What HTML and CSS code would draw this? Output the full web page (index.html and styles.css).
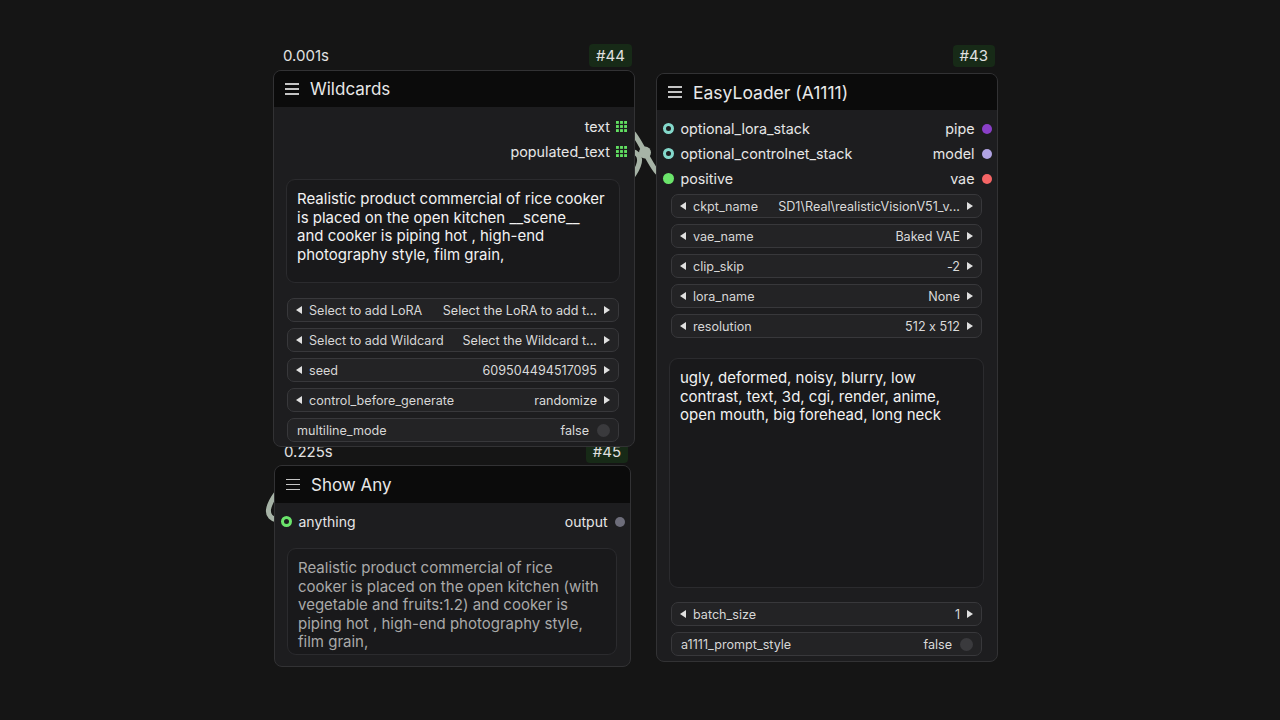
FILE: index.html
```html
<!DOCTYPE html>
<html>
<head>
<meta charset="utf-8">
<link rel="stylesheet" href="styles.css">
</head>
<body>
<svg class="links" width="1280" height="720" viewBox="0 0 1280 720">
  <path d="M 622 150 C 747 150, 161 521, 286 521" fill="none" stroke="#a6b3a6" stroke-width="5"/>
  <path d="M 622 126 C 639.5 126, 650.5 179, 668 179" fill="none" stroke="#a6b3a6" stroke-width="5"/>
  <circle cx="645" cy="152.5" r="6" fill="#a6b3a6"/>
</svg>

<div class="wrap w-show">
  <div class="meta m-show"><span class="time">0.225s</span><span class="badge">#45</span></div>
  <div class="node n-show">
    <div class="title"><span class="ham"><i></i><i></i><i></i></span><span>Show Any</span></div>
    <div class="slots s-show">
      <div class="slot"><span class="dot ring green"></span><span class="lbl">anything</span><span class="out">output</span><span class="dot gray"></span></div>
    </div>
    <div class="ta ta-show">Realistic product commercial of rice<br>cooker is placed on the open kitchen (with<br>vegetable and fruits:1.2) and cooker is<br>piping hot , high-end photography style,<br>film grain,</div>
  </div>
</div>

<div class="wrap w-wild">
  <div class="meta m-wild"><span class="time">0.001s</span><span class="badge">#44</span></div>
  <div class="node n-wild">
    <div class="title"><span class="ham"><i></i><i></i><i></i></span><span>Wildcards</span></div>
    <div class="slots s-wild">
      <div class="slot right"><span class="out">text</span><svg class="grid" width="11" height="11" viewBox="0 0 10 10"><g fill="#62e062"><rect x="0" y="0" width="2.6" height="2.6"/><rect x="3.7" y="0" width="2.6" height="2.6"/><rect x="7.4" y="0" width="2.6" height="2.6"/><rect x="0" y="3.7" width="2.6" height="2.6"/><rect x="3.7" y="3.7" width="2.6" height="2.6"/><rect x="7.4" y="3.7" width="2.6" height="2.6"/><rect x="0" y="7.4" width="2.6" height="2.6"/><rect x="3.7" y="7.4" width="2.6" height="2.6"/><rect x="7.4" y="7.4" width="2.6" height="2.6"/></g></svg></div>
      <div class="slot right"><span class="out">populated_text</span><svg class="grid" width="11" height="11" viewBox="0 0 10 10"><g fill="#62e062"><rect x="0" y="0" width="2.6" height="2.6"/><rect x="3.7" y="0" width="2.6" height="2.6"/><rect x="7.4" y="0" width="2.6" height="2.6"/><rect x="0" y="3.7" width="2.6" height="2.6"/><rect x="3.7" y="3.7" width="2.6" height="2.6"/><rect x="7.4" y="3.7" width="2.6" height="2.6"/><rect x="0" y="7.4" width="2.6" height="2.6"/><rect x="3.7" y="7.4" width="2.6" height="2.6"/><rect x="7.4" y="7.4" width="2.6" height="2.6"/></g></svg></div>
    </div>
    <div class="ta ta-wild">Realistic product commercial of rice cooker<br>is placed on the open kitchen __scene__<br>and cooker is piping hot , high-end<br>photography style, film grain,</div>
    <div class="widgets wg-wild">
      <div class="w"><span class="al"></span><span class="wl">Select to add LoRA</span><span class="wv">Select the LoRA to add t...</span><span class="ar"></span></div>
      <div class="w"><span class="al"></span><span class="wl">Select to add Wildcard</span><span class="wv">Select the Wildcard t...</span><span class="ar"></span></div>
      <div class="w"><span class="al"></span><span class="wl">seed</span><span class="wv">609504494517095</span><span class="ar"></span></div>
      <div class="w"><span class="al"></span><span class="wl">control_before_generate</span><span class="wv">randomize</span><span class="ar"></span></div>
      <div class="w tog"><span class="wl">multiline_mode</span><span class="wv">false</span><span class="knob"></span></div>
    </div>
  </div>
</div>

<div class="wrap w-easy">
  <div class="meta m-easy"><span class="time"></span><span class="badge">#43</span></div>
  <div class="node n-easy">
    <div class="title"><span class="ham"><i></i><i></i><i></i></span><span>EasyLoader (A1111)</span></div>
    <div class="slots s-easy">
      <div class="slot"><span class="dot ring teal"></span><span class="lbl">optional_lora_stack</span><span class="out">pipe</span><span class="dot purple"></span></div>
      <div class="slot"><span class="dot ring teal"></span><span class="lbl">optional_controlnet_stack</span><span class="out">model</span><span class="dot lavender"></span></div>
      <div class="slot"><span class="dot green"></span><span class="lbl">positive</span><span class="out">vae</span><span class="dot red"></span></div>
    </div>
    <div class="widgets wg-easy">
      <div class="w"><span class="al"></span><span class="wl">ckpt_name</span><span class="wv">SD1\Real\realisticVisionV51_v...</span><span class="ar"></span></div>
      <div class="w"><span class="al"></span><span class="wl">vae_name</span><span class="wv">Baked VAE</span><span class="ar"></span></div>
      <div class="w"><span class="al"></span><span class="wl">clip_skip</span><span class="wv">-2</span><span class="ar"></span></div>
      <div class="w"><span class="al"></span><span class="wl">lora_name</span><span class="wv">None</span><span class="ar"></span></div>
      <div class="w"><span class="al"></span><span class="wl">resolution</span><span class="wv">512 x 512</span><span class="ar"></span></div>
    </div>
    <div class="ta ta-easy">ugly, deformed, noisy, blurry, low<br>contrast, text, 3d, cgi, render, anime,<br>open mouth, big forehead, long neck</div>
    <div class="widgets wg-easy2">
      <div class="w"><span class="al"></span><span class="wl">batch_size</span><span class="wv">1</span><span class="ar"></span></div>
      <div class="w tog"><span class="wl">a1111_prompt_style</span><span class="wv">false</span><span class="knob"></span></div>
    </div>
  </div>
</div>
</body>
</html>
```

FILE: styles.css
```css
html, body {
  margin: 0;
  padding: 0;
}
body {
  width: 1280px;
  height: 720px;
  overflow: hidden;
  background: #151515;
  position: relative;
  font-family: Inter, "Noto Sans", "Liberation Sans", sans-serif;
  font-feature-settings: "calt" 0;
  color: #dedede;
}
.links {
  position: absolute;
  left: 0;
  top: 0;
}
.wrap {
  position: absolute;
  display: flex;
  flex-direction: column;
}
.w-wild { left: 273px; top: 44px; width: 362px; z-index: 3; }
.w-show { left: 274px; top: 440px; width: 357px; z-index: 2; }
.w-easy { left: 656px; top: 45px; width: 342px; z-index: 2; }

.meta {
  display: flex;
  justify-content: space-between;
  align-items: flex-start;
  background: #151515;
}
.m-wild { height: 26px; padding-right: 3px; }
.m-show { height: 25px; padding-right: 3px; }
.m-easy { height: 28px; padding-right: 3px; background: transparent; }
.time {
  font-size: 15px;
  line-height: 24px;
  padding-left: 10px;
  color: #e2e2e2;
}
.badge {
  background: #172a17;
  color: #e0e0e0;
  font-size: 15px;
  line-height: 23px;
  height: 23px;
  padding: 0 7px;
  border-radius: 4px;
}
.m-easy .badge { line-height: 22px; height: 22px; }

.node {
  background: #1d1d1f;
  border: 1px solid #323234;
  border-radius: 8px;
  overflow: hidden;
  box-sizing: border-box;
  display: flex;
  flex-direction: column;
}
.n-wild { height: 377px; }
.n-show { height: 202px; }
.n-easy { height: 589px; }

.title {
  background: #0b0b0b;
  height: 36px;
  flex: none;
  display: flex;
  align-items: center;
  gap: 11px;
  padding-left: 11px;
  font-size: 17px;
  color: #e8e8e8;
}
.n-show .title { height: 37px; }
.n-easy .title { font-size: 17.5px; }
.ham {
  display: flex;
  flex-direction: column;
  gap: 3.5px;
  width: 14px;
}
.ham i {
  display: block;
  height: 1.5px;
  background: #c4c4c4;
}

.slots { display: flex; flex-direction: column; }
.s-wild { padding-top: 7px; }
.s-easy { padding-top: 6px; }
.s-show { padding-top: 6px; }
.slot {
  height: 25px;
  display: flex;
  align-items: center;
  font-size: 14.3px;
  color: #e6e6e6;
  padding: 0 5.5px;
}
.n-show .slot { font-size: 14px; }
.slot.right { justify-content: flex-end; padding-right: 7px; }
.slot .lbl { margin-left: 7px; flex: 1; }
.n-show .slot .lbl { margin-left: 7px; }
.slot .out { margin-right: 7px; }
.slot.right .out { margin-right: 6px; }
.grid { display: block; }
.dot {
  width: 11px;
  height: 11px;
  border-radius: 50%;
  box-sizing: border-box;
  flex: none;
}
.dot.ring { border: 3px solid; background: #1d1d1f; }
.dot.teal { border-color: #84d8cb; }
.dot.green { background: #6be46b; }
.dot.ring.green { border-color: #6be46b; background: #1d1d1f; }
.dot.gray { background: #6d6d7a; width: 10px; height: 10px; }
.dot.purple { background: #8a3fc8; width: 10px; height: 10px; }
.dot.lavender { background: #b1a3e3; width: 10px; height: 10px; }
.dot.red { background: #f56565; width: 10px; height: 10px; }

.ta {
  box-sizing: border-box;
  background: #19191b;
  border: 1px solid #2b2b2e;
  border-radius: 9px;
  font-size: 15px;
  line-height: 18.5px;
  color: #f2f2f2;
  padding: 10px 10px;
  white-space: nowrap;
  overflow: hidden;
  flex: none;
}
.ta-wild { margin: 15px 14px 0 12px; height: 104px; }
.ta-show { margin: 14px 13px 0 12px; height: 107px; color: #a9a9a9; }
.ta-easy { margin: 20px 13px 0 12px; height: 230px; }

.widgets {
  display: flex;
  flex-direction: column;
  gap: 6px;
}
.wg-wild { margin: 15px 15px 0 13px; }
.wg-easy { margin: 3px 15px 0 14px; }
.wg-easy2 { margin: 14px 15px 0 14px; }
.w {
  height: 24px;
  box-sizing: border-box;
  background: #232325;
  border: 1px solid #38383b;
  border-radius: 7px;
  display: flex;
  align-items: center;
  padding: 0 8px;
  font-size: 12.6px;
  color: #d6d6d6;
}
.w .wl { margin-left: 7px; flex: 1; white-space: nowrap; }
.w .wv { white-space: nowrap; color: #dadada; }
.w .al {
  width: 0;
  height: 0;
  border-top: 4px solid transparent;
  border-bottom: 4px solid transparent;
  border-right: 6px solid #e0e0e0;
}
.w .ar {
  width: 0;
  height: 0;
  margin-left: 7px;
  border-top: 4px solid transparent;
  border-bottom: 4px solid transparent;
  border-left: 6px solid #e0e0e0;
}
.w.tog .wl { margin-left: 1px; }
.knob {
  width: 13px;
  height: 13px;
  border-radius: 50%;
  background: #3a3a3d;
  margin-left: 8px;
}
```
